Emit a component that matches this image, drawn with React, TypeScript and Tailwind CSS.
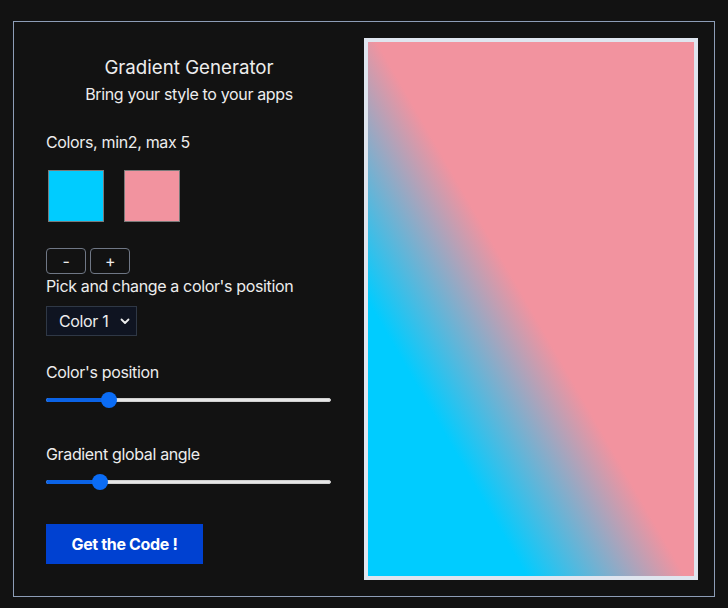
import React from 'react'

const Slider = ({ value }: { value: number }) => {
  // value is 0..1, thumb travels inside the track
  return (
    <div className="relative h-4 w-[285px]">
      <div className="absolute left-0 right-0 top-[6px] h-[4px] rounded-full bg-[#e6e6e6] border border-[#cfcfcf]" />
      <div
        className="absolute left-0 top-[6px] h-[4px] rounded-l-full bg-[#0b63e6]"
        style={{ width: `${8 + value * 269}px` }}
      />
      <div
        className="absolute top-0 h-4 w-4 rounded-full bg-[#0a6cf6]"
        style={{ left: `${value * 269}px` }}
      />
    </div>
  )
}

const App = () => {
  return (
    <div
      className="h-[608px] w-[728px] bg-[#121212] pl-[13px] pt-[21px] text-[#ededed] tracking-[-0.35px]"
      style={{ fontFamily: 'Inter, "Noto Sans", sans-serif' }}
    >
      <div className="flex h-[576px] w-[702px] gap-8 border border-[#8d9db6] p-4">
        {/* Controls */}
        <div className="ml-4 flex w-[286px] flex-col pt-4">
          <h1 className="text-center text-[18.7px] leading-7 tracking-normal">Gradient Generator</h1>
          <p className="text-center text-[16px] leading-6">Bring your style to your apps</p>

          <p className="mt-6 text-[16px] leading-6">Colors, min2, max 5</p>
          <div className="mt-4 ml-[2px] flex gap-5">
            <div className="h-[52px] w-[56px] border border-[#7a7a7a] bg-[#00ccff]" />
            <div className="h-[52px] w-[56px] border border-[#7a7a7a] bg-[#f2939f]" />
          </div>

          <div className="mt-[26px] flex gap-1">
            <button className="flex h-[26px] w-10 items-center justify-center rounded border border-[#6f7785] text-[16px] leading-none">
              -
            </button>
            <button className="flex h-[26px] w-10 items-center justify-center rounded border border-[#6f7785] text-[16px] leading-none">
              +
            </button>
          </div>
          <p className="text-[16px] leading-6">Pick and change a color's position</p>
          <div className="mt-2 flex h-[30px] w-[91px] items-center justify-between border border-[#2f3846] bg-[#0f1421] pl-3 pr-[6px] text-[16px]">
            <span>Color 1</span>
            <svg width="10" height="7" viewBox="0 0 10 7" fill="none">
              <path d="M1.5 1.5 L5 5 L8.5 1.5" stroke="#ededed" strokeWidth="1.8" strokeLinecap="round" strokeLinejoin="round" />
            </svg>
          </div>

          <p className="mt-6 text-[16px] leading-6">Color's position</p>
          <div className="mt-2">
            <Slider value={0.203} />
          </div>

          <p className="mt-[34px] text-[16px] leading-6">Gradient global angle</p>
          <div className="mt-2">
            <Slider value={0.17} />
          </div>

          <button className="mt-[34px] h-10 w-[157px] bg-[#0041d1] text-[16px] font-bold text-white">
            Get the Code !
          </button>
        </div>

        {/* Preview */}
        <div className="h-[542px] w-[334px] border-4 border-[#dfe5ef]">
          <div
            className="h-full w-full"
            style={{ background: 'linear-gradient(60deg, #00ccff 25%, #f2939f 50%)' }}
          />
        </div>
      </div>
    </div>
  )
}

export default App
